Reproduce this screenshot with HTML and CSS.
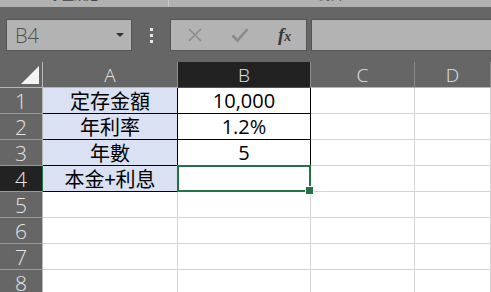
FILE: index.html
```html
<!DOCTYPE html>
<html lang="zh-Hant">
<head>
    <meta charset="UTF-8">
    <meta name="viewport" content="width=device-width, initial-scale=1.0">
    <title>本金+利息</title>
    <link rel="stylesheet" href="styles.css">
</head>
<body>

    <div class="ribbon">
        <span class="ribbon-label first">字型設定</span>
        <span class="ribbon-sep"></span>
        <span class="ribbon-label second">對齊</span>
    </div>

    <div class="toolbar">
        <div class="namebox">
            <span>B4</span>
            <span class="arrow"></span>
        </div>
        <div class="grip">
            <i></i><i></i><i></i>
        </div>
        <div class="fbuttons">
            <svg class="ficon" width="16" height="16" viewBox="0 0 16 16">
                <path d="M2 2 L14 14 M14 2 L2 14" stroke="#8a8a8a" stroke-width="1.6" fill="none"/>
            </svg>
            <svg class="ficon" width="18" height="16" viewBox="0 0 18 16">
                <path d="M1.5 8.5 L6.5 13.5 L16.5 2" stroke="#8a8a8a" stroke-width="2.6" fill="none"/>
            </svg>
            <span class="fx">f<small>x</small></span>
        </div>
        <div class="formula"></div>
    </div>

    <div class="sheet">
        <div class="hd corner"><span class="tri"></span></div>
        <div class="hd">A</div>
        <div class="hd sel-col">B</div>
        <div class="hd">C</div>
        <div class="hd">D</div>

        <div class="rn">1</div>
        <div class="cell lbl">定存金額</div>
        <div class="cell val">10,000</div>
        <div class="cell"></div>
        <div class="cell"></div>

        <div class="rn">2</div>
        <div class="cell lbl">年利率</div>
        <div class="cell val">1.2%</div>
        <div class="cell"></div>
        <div class="cell"></div>

        <div class="rn">3</div>
        <div class="cell lbl">年數</div>
        <div class="cell val">5</div>
        <div class="cell"></div>
        <div class="cell"></div>

        <div class="rn sel-row">4</div>
        <div class="cell lbl">本金+利息</div>
        <div class="cell active"></div>
        <div class="cell"></div>
        <div class="cell"></div>

        <div class="rn">5</div>
        <div class="cell"></div>
        <div class="cell"></div>
        <div class="cell"></div>
        <div class="cell"></div>

        <div class="rn">6</div>
        <div class="cell"></div>
        <div class="cell"></div>
        <div class="cell"></div>
        <div class="cell"></div>

        <div class="rn">7</div>
        <div class="cell"></div>
        <div class="cell"></div>
        <div class="cell"></div>
        <div class="cell"></div>

        <div class="rn">8</div>
        <div class="cell"></div>
        <div class="cell"></div>
        <div class="cell"></div>
        <div class="cell"></div>
    </div>

</body>
</html>
```

FILE: styles.css
```css
* {
    box-sizing: border-box;
}

body {
    margin: 0;
    padding: 0;
    background-color: #666666;
    font-family: "Open Sans", "Noto Sans CJK TC", sans-serif;
    overflow: hidden;
}

/* ribbon remnant at the very top */
.ribbon {
    height: 7px;
    background-color: #b1b1b1;
    display: flex;
    overflow: hidden;
}

.ribbon-label {
    font-family: "Noto Sans CJK TC", sans-serif;
    font-size: 12px;
    line-height: 12px;
    margin-top: -11px;
    color: #444;
}

.ribbon-label.first {
    margin-left: 50px;
}

.ribbon-sep {
    width: 1px;
    background-color: #c8c8c8;
    margin-left: 70px;
}

.ribbon-label.second {
    margin-left: 150px;
}

/* name box + formula bar */
.toolbar {
    display: flex;
    align-items: center;
    height: 55px;
    padding: 12px 0 11px 6px;
}

.namebox {
    width: 126px;
    height: 32px;
    background-color: #b3b3b3;
    border: 1px solid #555;
    display: flex;
    align-items: center;
    justify-content: space-between;
    padding: 0 7px 0 8px;
    font-size: 20px;
    font-weight: 300;
    color: #505050;
}

.arrow {
    width: 0;
    height: 0;
    border-left: 4px solid transparent;
    border-right: 4px solid transparent;
    border-top: 4px solid #333;
}

.grip {
    width: 38px;
    display: flex;
    flex-direction: column;
    align-items: center;
    gap: 3px;
}

.grip i {
    width: 3px;
    height: 3px;
    background-color: #e6e6e6;
}

.fbuttons {
    width: 137px;
    height: 32px;
    background-color: #b3b3b3;
    border: 1px solid #555;
    display: flex;
    align-items: center;
    padding-left: 16px;
}

.ficon {
    margin-right: 28px;
}

.ficon + .ficon {
    margin-right: 29px;
}

.fx {
    font-family: "Liberation Serif", serif;
    font-style: italic;
    font-weight: bold;
    font-size: 19px;
    color: #3a3a3a;
}

.fx small {
    font-size: 14px;
}

.formula {
    flex: 1;
    height: 32px;
    margin-left: 4px;
    background-color: #b3b3b3;
    border: 1px solid #555;
    border-right: none;
}

/* the grid */
.sheet {
    display: grid;
    grid-template-columns: 43px 135px 133px 104px 1fr;
    grid-auto-rows: 26px;
    background-color: #fff;
}

.hd {
    background-color: #666666;
    color: #e4e4e4;
    font-size: 19px;
    font-weight: 300;
    line-height: 24px;
    display: flex;
    align-items: center;
    justify-content: center;
    border-right: 1px solid #8c8c8c;
    border-bottom: 1px solid #b8b8b8;
}

.corner {
    position: relative;
    border-right: 1px solid #b8b8b8;
}

.tri {
    position: absolute;
    right: 3px;
    bottom: 3px;
    width: 0;
    height: 0;
    border-left: 18px solid transparent;
    border-bottom: 18px solid #f4f4f4;
}

.sel-col {
    background-color: #222;
    border-bottom: 1px solid #217346;
}

.rn {
    background-color: #666666;
    color: #e4e4e4;
    font-size: 21px;
    font-weight: 300;
    line-height: 24px;
    display: flex;
    align-items: center;
    justify-content: center;
    border-right: 1px solid #b8b8b8;
    border-bottom: 1px solid #9a9a9a;
}

.sel-row {
    background-color: #222;
    border-right: 1px solid #217346;
}

.cell {
    border-right: 1px solid #d4d4d4;
    border-bottom: 1px solid #d4d4d4;
    display: flex;
    align-items: center;
    justify-content: center;
    line-height: 24px;
    color: #000;
}

.lbl {
    background-color: #d9e1f2;
    font-family: "Noto Sans CJK TC", sans-serif;
    font-size: 20px;
    border-right: 1px solid #000;
    border-bottom: 1px solid #000;
}

.val {
    font-size: 20px;
    border-right: 1px solid #000;
    border-bottom: 1px solid #000;
}

.active {
    position: relative;
}

.active::after {
    content: "";
    position: absolute;
    top: -1px;
    left: -1px;
    right: -1px;
    bottom: -1px;
    border: 2px solid #217346;
}

.active::before {
    content: "";
    position: absolute;
    right: -4px;
    bottom: -4px;
    width: 7px;
    height: 7px;
    background-color: #217346;
    border: 1px solid #fff;
    z-index: 2;
}
```
